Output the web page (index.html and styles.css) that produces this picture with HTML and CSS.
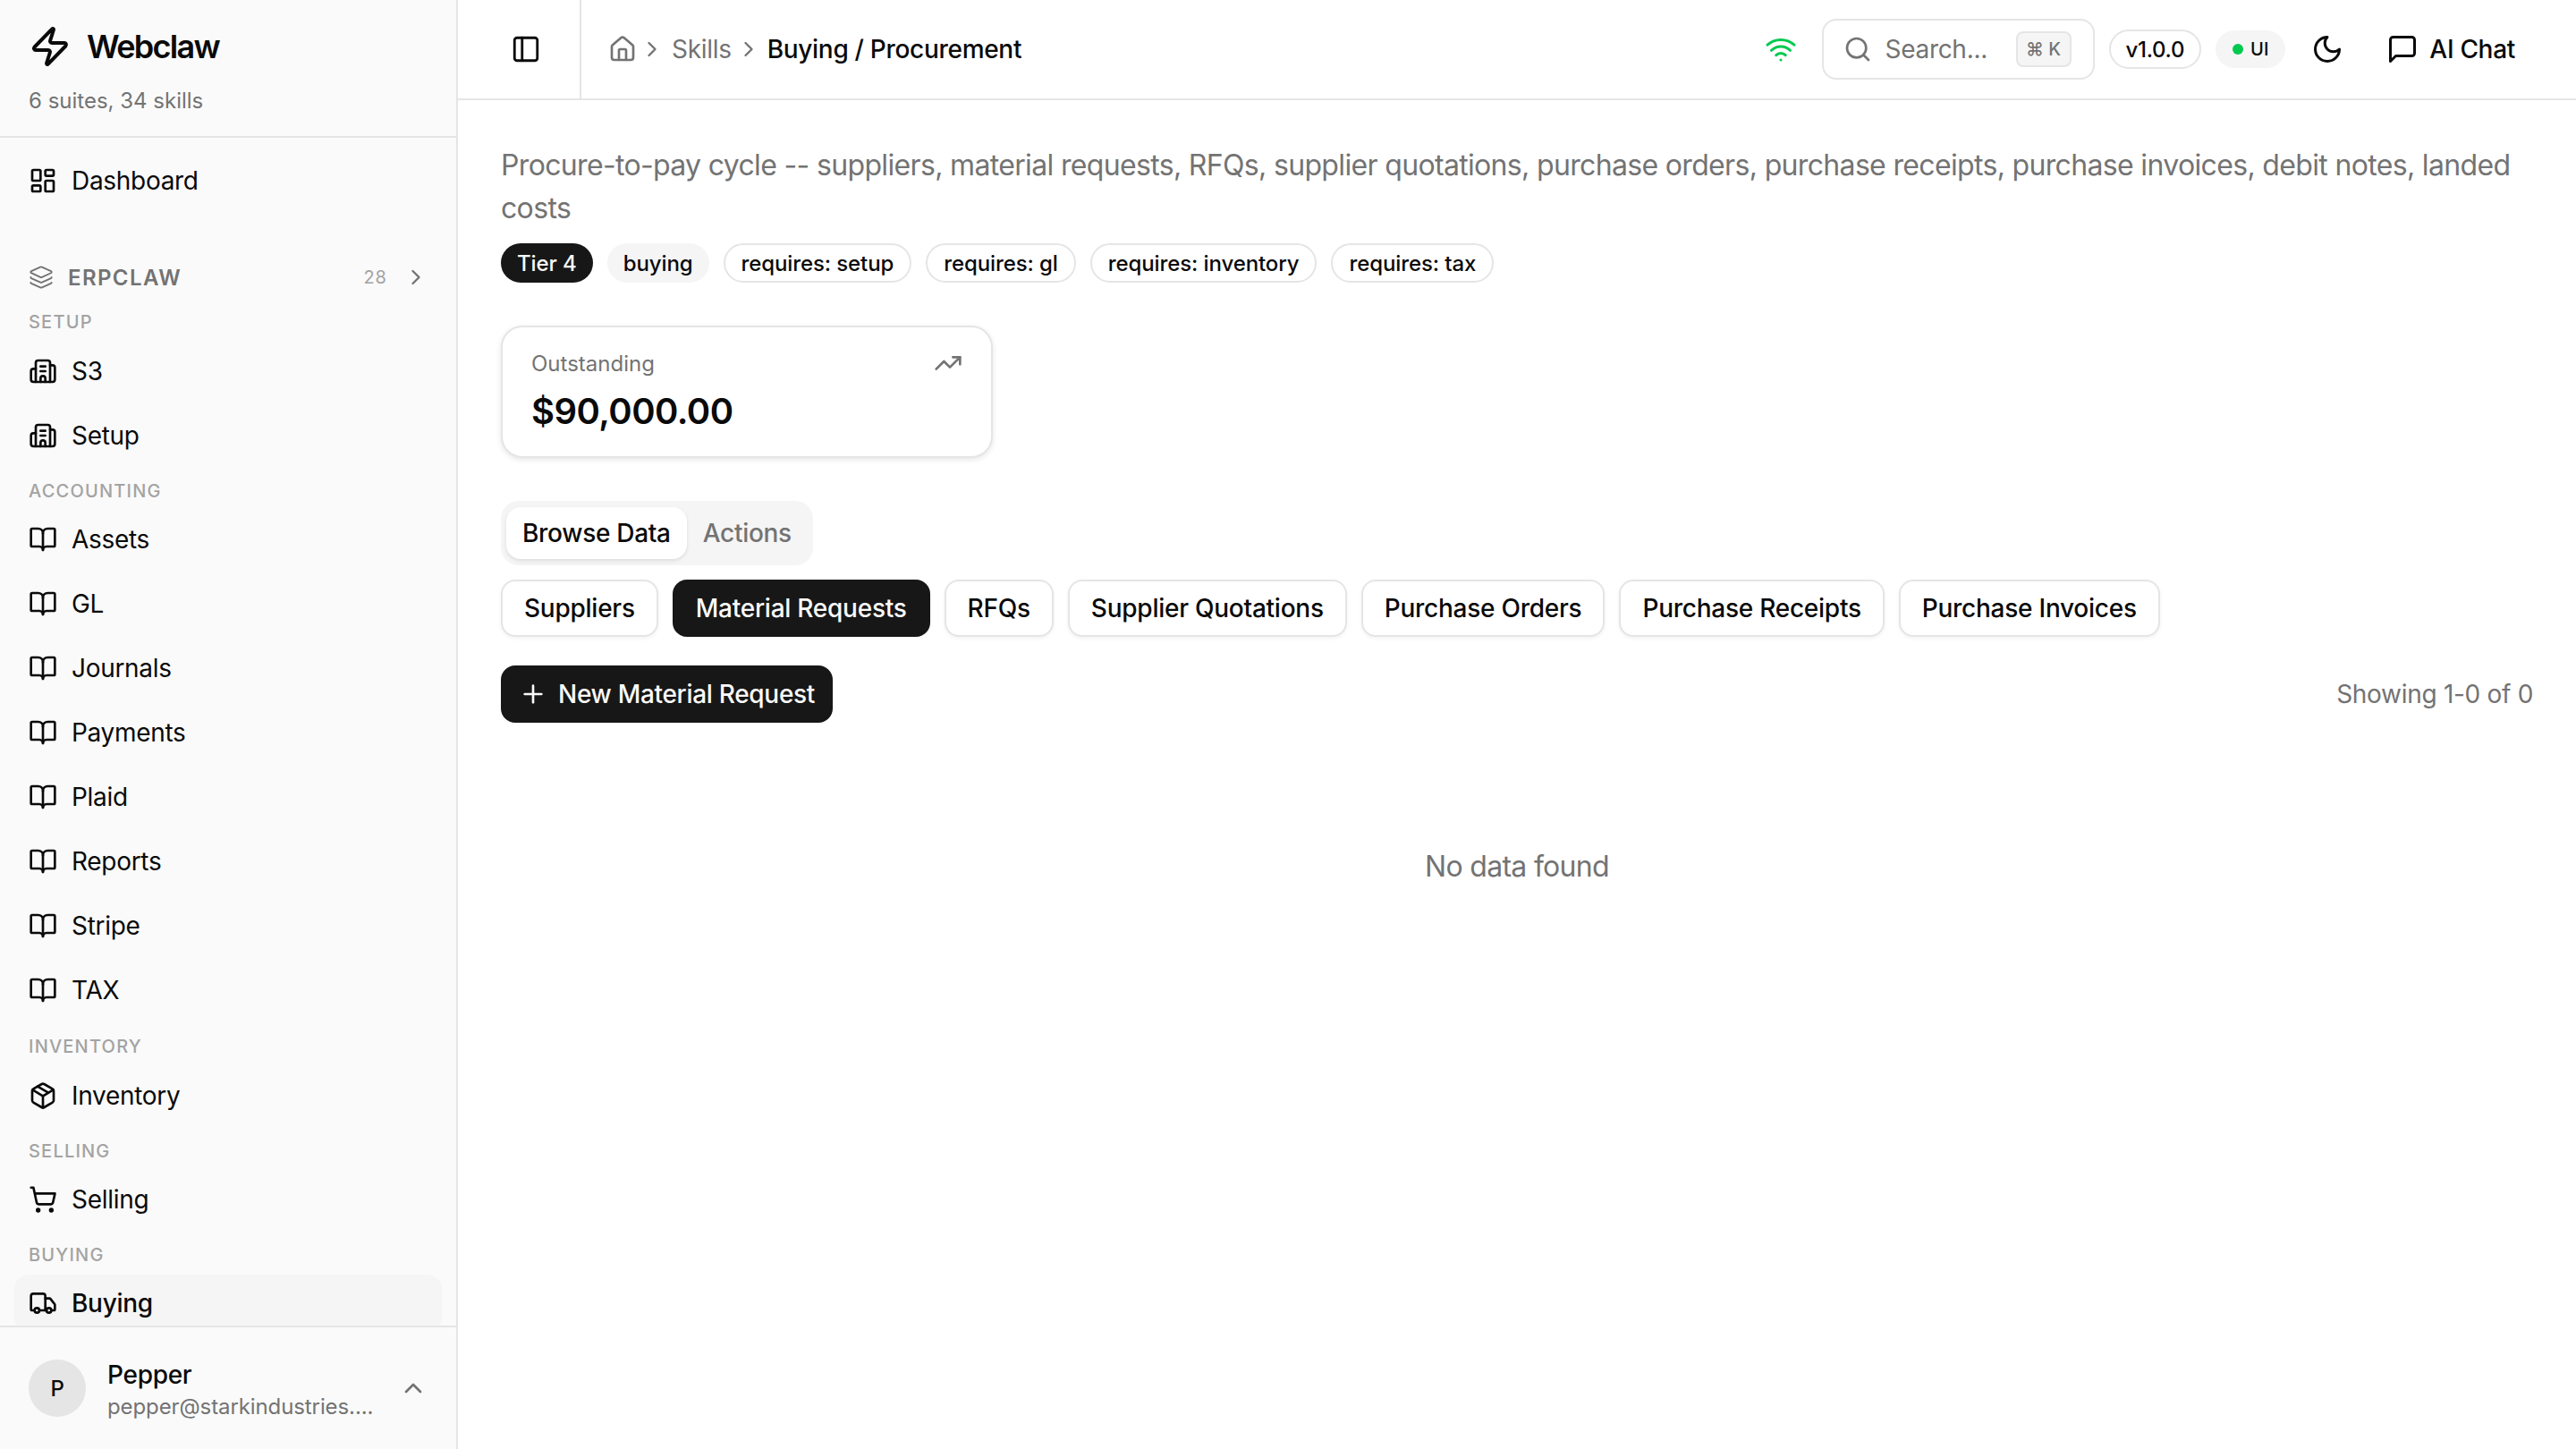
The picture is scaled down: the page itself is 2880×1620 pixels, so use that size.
FILE: index.html
```html
<!DOCTYPE html>
<html lang="en">
<head>
<meta charset="utf-8">
<title>Webclaw - Buying / Procurement</title>
<link rel="stylesheet" href="styles.css">
</head>
<body>
<svg class="defs" aria-hidden="true">
  <symbol id="i-zap" viewBox="0 0 24 24"><path d="M4 14a1 1 0 0 1-.78-1.63l9.9-10.2a.5.5 0 0 1 .86.46l-1.92 6.02A1 1 0 0 0 13 10h7a1 1 0 0 1 .78 1.63l-9.9 10.2a.5.5 0 0 1-.86-.46l1.92-6.02A1 1 0 0 0 11 14z"/></symbol>
  <symbol id="i-dash" viewBox="0 0 24 24"><rect width="7" height="9" x="3" y="3" rx="1"/><rect width="7" height="5" x="14" y="3" rx="1"/><rect width="7" height="9" x="14" y="12" rx="1"/><rect width="7" height="5" x="3" y="16" rx="1"/></symbol>
  <symbol id="i-layers" viewBox="0 0 24 24"><path d="M12.83 2.18a2 2 0 0 0-1.66 0L2.6 6.08a1 1 0 0 0 0 1.83l8.58 3.91a2 2 0 0 0 1.66 0l8.58-3.9a1 1 0 0 0 0-1.83z"/><path d="M2 12a1 1 0 0 0 .58.91l8.6 3.91a2 2 0 0 0 1.65 0l8.58-3.9A1 1 0 0 0 22 12"/><path d="M2 17a1 1 0 0 0 .58.91l8.6 3.91a2 2 0 0 0 1.65 0l8.58-3.9A1 1 0 0 0 22 17"/></symbol>
  <symbol id="i-building" viewBox="0 0 24 24"><path d="M10 12h4"/><path d="M10 8h4"/><path d="M14 21v-3a2 2 0 0 0-4 0v3"/><path d="M6 10H4a2 2 0 0 0-2 2v7a2 2 0 0 0 2 2h16a2 2 0 0 0 2-2V9a2 2 0 0 0-2-2h-2"/><path d="M6 21V5a2 2 0 0 1 2-2h8a2 2 0 0 1 2 2v16"/></symbol>
  <symbol id="i-book" viewBox="0 0 24 24"><path d="M12 7v14"/><path d="M3 18a1 1 0 0 1-1-1V4a1 1 0 0 1 1-1h5a4 4 0 0 1 4 4 4 4 0 0 1 4-4h5a1 1 0 0 1 1 1v13a1 1 0 0 1-1 1h-6a3 3 0 0 0-3 3 3 3 0 0 0-3-3z"/></symbol>
  <symbol id="i-package" viewBox="0 0 24 24"><path d="M11 21.73a2 2 0 0 0 2 0l7-4A2 2 0 0 0 21 16V8a2 2 0 0 0-1-1.73l-7-4a2 2 0 0 0-2 0l-7 4A2 2 0 0 0 3 8v8a2 2 0 0 0 1 1.73z"/><path d="M12 22V12"/><path d="m3.3 7 7.703 4.734a2 2 0 0 0 1.994 0L20.7 7"/><path d="m7.5 4.27 9 5.15"/></symbol>
  <symbol id="i-cart" viewBox="0 0 24 24"><circle cx="8" cy="21" r="1"/><circle cx="19" cy="21" r="1"/><path d="M2.05 2.05h2l2.66 12.42a2 2 0 0 0 2 1.58h9.78a2 2 0 0 0 1.95-1.57l1.65-7.43H5.12"/></symbol>
  <symbol id="i-truck" viewBox="0 0 24 24"><path d="M14 18V6a2 2 0 0 0-2-2H4a2 2 0 0 0-2 2v11a1 1 0 0 0 1 1h2"/><path d="M15 18H9"/><path d="M19 18h2a1 1 0 0 0 1-1v-3.65a1 1 0 0 0-.22-.624l-3.48-4.35A1 1 0 0 0 17.52 8H14"/><circle cx="17" cy="18" r="2"/><circle cx="7" cy="18" r="2"/></symbol>
  <symbol id="i-right" viewBox="0 0 24 24"><path d="m9 18 6-6-6-6"/></symbol>
  <symbol id="i-up" viewBox="0 0 24 24"><path d="m18 15-6-6-6 6"/></symbol>
  <symbol id="i-panel" viewBox="0 0 24 24"><rect width="18" height="18" x="3" y="3" rx="2"/><path d="M9 3v18"/></symbol>
  <symbol id="i-house" viewBox="0 0 24 24"><path d="M15 21v-8a1 1 0 0 0-1-1h-4a1 1 0 0 0-1 1v8"/><path d="M3 10a2 2 0 0 1 .709-1.528l7-5.999a2 2 0 0 1 2.582 0l7 5.999A2 2 0 0 1 21 10v9a2 2 0 0 1-2 2H5a2 2 0 0 1-2-2z"/></symbol>
  <symbol id="i-wifi" viewBox="0 0 24 24"><path d="M12 20h.01"/><path d="M2 8.82a15 15 0 0 1 20 0"/><path d="M5 12.859a10 10 0 0 1 14 0"/><path d="M8.5 16.429a5 5 0 0 1 7 0"/></symbol>
  <symbol id="i-search" viewBox="0 0 24 24"><path d="m21 21-4.34-4.34"/><circle cx="11" cy="11" r="8"/></symbol>
  <symbol id="i-moon" viewBox="0 0 24 24"><path d="M12 3a6 6 0 0 0 9 9 9 9 0 1 1-9-9Z"/></symbol>
  <symbol id="i-chat" viewBox="0 0 24 24"><path d="M21 15a2 2 0 0 1-2 2H7l-4 4V5a2 2 0 0 1 2-2h14a2 2 0 0 1 2 2z"/></symbol>
  <symbol id="i-trend" viewBox="0 0 24 24"><path d="M16 7h6v6"/><path d="m22 7-8.5 8.5-5-5L2 17"/></symbol>
  <symbol id="i-plus" viewBox="0 0 24 24"><path d="M5 12h14"/><path d="M12 5v14"/></symbol>
</svg>

<div class="app">
  <aside class="sidebar">
    <div class="brand">
      <div class="brand-row">
        <svg class="ic ic-48"><use href="#i-zap"/></svg>
        <span class="brand-name">Webclaw</span>
      </div>
      <div class="brand-sub">6 suites, 34 skills</div>
    </div>

    <nav class="nav">
      <a class="item"><svg class="ic"><use href="#i-dash"/></svg>Dashboard</a>

      <div class="suite">
        <svg class="ic ic-28 muted thin"><use href="#i-layers"/></svg>
        <span class="suite-name">ERPCLAW</span>
        <span class="suite-count">28</span>
        <svg class="ic ic-28 muted"><use href="#i-right"/></svg>
      </div>

      <div class="label label-first">SETUP</div>
      <div class="group">
        <a class="item"><svg class="ic"><use href="#i-building"/></svg>S3</a>
        <a class="item"><svg class="ic"><use href="#i-building"/></svg>Setup</a>
      </div>

      <div class="label">ACCOUNTING</div>
      <div class="group">
        <a class="item"><svg class="ic"><use href="#i-book"/></svg>Assets</a>
        <a class="item"><svg class="ic"><use href="#i-book"/></svg>GL</a>
        <a class="item"><svg class="ic"><use href="#i-book"/></svg>Journals</a>
        <a class="item"><svg class="ic"><use href="#i-book"/></svg>Payments</a>
        <a class="item"><svg class="ic"><use href="#i-book"/></svg>Plaid</a>
        <a class="item"><svg class="ic"><use href="#i-book"/></svg>Reports</a>
        <a class="item"><svg class="ic"><use href="#i-book"/></svg>Stripe</a>
        <a class="item"><svg class="ic"><use href="#i-book"/></svg>TAX</a>
      </div>

      <div class="label label-wide">INVENTORY</div>
      <div class="group">
        <a class="item"><svg class="ic"><use href="#i-package"/></svg>Inventory</a>
      </div>

      <div class="label">SELLING</div>
      <div class="group">
        <a class="item"><svg class="ic"><use href="#i-cart"/></svg>Selling</a>
      </div>

      <div class="label">BUYING</div>
      <div class="group">
        <a class="item item-active"><svg class="ic"><use href="#i-truck"/></svg>Buying</a>
      </div>
    </nav>

    <div class="user">
      <div class="avatar">P</div>
      <div class="user-info">
        <div class="user-name">Pepper</div>
        <div class="user-mail">pepper@starkindustries....</div>
      </div>
      <svg class="ic muted"><use href="#i-up"/></svg>
    </div>
  </aside>

  <div class="main">
    <header class="topbar">
      <div class="toggle"><svg class="ic ic-toggle"><use href="#i-panel"/></svg></div>
      <div class="crumbs">
        <svg class="ic home muted"><use href="#i-house"/></svg>
        <svg class="ic ic-28 muted"><use href="#i-right"/></svg>
        <span class="crumb-link">Skills</span>
        <svg class="ic ic-28 muted"><use href="#i-right"/></svg>
        <span class="crumb-here">Buying / Procurement</span>
      </div>
      <div class="tools">
        <svg class="ic ic-36 wifi"><use href="#i-wifi"/></svg>
        <div class="search">
          <svg class="ic muted"><use href="#i-search"/></svg>
          <span class="search-text">Search...</span>
          <kbd class="kbd">⌘ K</kbd>
        </div>
        <span class="version">v1.0.0</span>
        <span class="status"><span class="dot"></span>UI</span>
        <svg class="ic ic-36 moon"><use href="#i-moon"/></svg>
        <span class="chat"><svg class="ic ic-36"><use href="#i-chat"/></svg>AI Chat</span>
      </div>
    </header>

    <main class="content">
      <p class="desc">Procure-to-pay cycle -- suppliers, material requests, RFQs, supplier quotations, purchase orders, purchase receipts, purchase invoices, debit notes, landed costs</p>
      <div class="tags">
        <span class="tag tag-dark">Tier 4</span>
        <span class="tag tag-soft">buying</span>
        <span class="tag tag-line">requires: setup</span>
        <span class="tag tag-line">requires: gl</span>
        <span class="tag tag-line">requires: inventory</span>
        <span class="tag tag-line">requires: tax</span>
      </div>

      <div class="card">
        <div class="card-top">
          <span class="card-label">Outstanding</span>
          <svg class="ic muted"><use href="#i-trend"/></svg>
        </div>
        <div class="card-value">$90,000.00</div>
      </div>

      <div class="tabs">
        <span class="tab tab-on">Browse Data</span>
        <span class="tab">Actions</span>
      </div>

      <div class="subtabs">
        <span class="btn">Suppliers</span>
        <span class="btn btn-dark">Material Requests</span>
        <span class="btn">RFQs</span>
        <span class="btn">Supplier Quotations</span>
        <span class="btn">Purchase Orders</span>
        <span class="btn">Purchase Receipts</span>
        <span class="btn">Purchase Invoices</span>
      </div>

      <div class="toolbar">
        <span class="btn btn-dark btn-new"><svg class="ic"><use href="#i-plus"/></svg>New Material Request</span>
        <span class="count">Showing 1-0 of 0</span>
      </div>

      <div class="empty">No data found</div>
    </main>
  </div>
</div>
</body>
</html>
```

FILE: styles.css
```css
* { box-sizing: border-box; }
html, body { margin: 0; height: 100%; }
body {
  background: #fff;
  color: #0a0a0a;
  font-family: Inter, "Liberation Sans", sans-serif;
  font-size: 28px;
  letter-spacing: -0.3px;
  overflow: hidden;
}
.defs { display: none; }

.ic {
  width: 32px;
  height: 32px;
  flex: none;
  fill: none;
  stroke: currentColor;
  stroke-width: 2;
  stroke-linecap: round;
  stroke-linejoin: round;
}
.ic-48 { width: 48px; height: 48px; }
.ic-36 { width: 36px; height: 36px; }
.ic-28 { width: 28px; height: 28px; }
.muted { color: #737373; }
.thin { stroke-width: 1.6; }

.app { display: flex; height: 1620px; }

/* Sidebar */
.sidebar {
  width: 512px;
  flex: none;
  display: flex;
  flex-direction: column;
  background: #fafafa;
  border-right: 2px solid #e5e5e5;
}
.brand {
  height: 154px;
  flex: none;
  padding: 28px 32px 0;
  border-bottom: 2px solid #e5e5e5;
}
.brand-row { display: flex; align-items: center; gap: 17px; }
.brand-name { font-size: 36px; font-weight: 600; letter-spacing: -1.7px; line-height: 48px; }
.brand-sub { font-size: 24px; line-height: 32px; letter-spacing: 0; color: #737373; margin-top: 21px; }

.nav {
  flex: 1;
  min-height: 0;
  overflow: hidden;
  padding: 16px;
}
.group { display: flex; flex-direction: column; gap: 8px; }
.item {
  display: flex;
  align-items: center;
  gap: 16px;
  height: 64px;
  flex: none;
  padding: 0 16px;
  border-radius: 16px;
  font-size: 28px;
  color: #0a0a0a;
}
.item-active { background: #f5f5f5; font-weight: 500; }

.suite {
  display: flex;
  align-items: center;
  height: 48px;
  margin-top: 52px;
  padding: 0 15px 0 16px;
}
.suite-name {
  margin-left: 16px;
  font-size: 24px;
  font-weight: 600;
  letter-spacing: 1.4px;
  color: #737373;
}
.suite-count {
  margin-left: auto;
  margin-right: 18px;
  font-size: 20px;
  letter-spacing: 1px;
  color: #a3a3a3;
}

.label {
  height: 30px;
  line-height: 30px;
  margin: 15px 0 7px;
  padding-left: 16px;
  font-size: 20px;
  font-weight: 500;
  letter-spacing: 1.2px;
  color: #a3a3a3;
}
.label-first { margin: 11px 0 8px; }
.label-wide { margin: 16px 0 8px; }

.user {
  height: 138px;
  flex: none;
  display: flex;
  align-items: center;
  padding: 0 32px;
  border-top: 2px solid #e5e5e5;
}
.avatar {
  width: 64px;
  height: 64px;
  flex: none;
  display: flex;
  align-items: center;
  justify-content: center;
  border-radius: 50%;
  background: #e5e5e5;
  font-size: 24px;
  font-weight: 500;
}
.user-info { flex: 1; min-width: 0; margin-left: 24px; padding-top: 4px; }
.user-name { font-size: 28px; font-weight: 500; line-height: 38px; }
.user-mail { font-size: 24px; line-height: 34px; letter-spacing: -0.1px; color: #737373; }

/* Main */
.main { flex: 1; min-width: 0; display: flex; flex-direction: column; }
.topbar {
  height: 112px;
  flex: none;
  display: flex;
  align-items: center;
  border-bottom: 2px solid #e5e5e5;
}
.toggle {
  width: 138px;
  height: 110px;
  flex: none;
  display: flex;
  align-items: center;
  justify-content: center;
  border-right: 2px solid #e5e5e5;
  padding-left: 15px;
}
.ic-toggle { width: 34px; height: 34px; }
.crumbs { display: flex; align-items: center; gap: 8px; margin-left: 30px; }
.home { margin-right: -5px; }
.crumb-link { color: #737373; margin-right: -3px; }
.crumb-here { font-weight: 500; margin-left: -1px; }

.tools { margin-left: auto; display: flex; align-items: center; padding-right: 68px; }
.wifi { color: #00c950; margin-right: 28px; }
.search {
  display: flex;
  align-items: center;
  width: 305px;
  height: 68px;
  padding: 0 24px 0 22px;
  border: 2px solid #e5e5e5;
  border-radius: 16px;
  background: #fff;
  gap: 15px;
  color: #737373;
}
.search-text { flex: 1; }
.kbd {
  display: flex;
  align-items: center;
  justify-content: center;
  width: 62px;
  height: 40px;
  background: #f5f5f5;
  border: 2px solid #e5e5e5;
  border-radius: 8px;
  font-family: Inter, "DejaVu Sans", sans-serif;
  font-size: 20px;
  font-weight: 500;
  letter-spacing: 0;
  color: #737373;
}
.version {
  display: flex;
  align-items: center;
  height: 44px;
  margin-left: 16px;
  padding: 0 17px;
  border: 2px solid #e5e5e5;
  border-radius: 22px;
  font-size: 24px;
  font-weight: 500;
}
.status {
  display: flex;
  align-items: center;
  gap: 8px;
  height: 42px;
  margin-left: 16px;
  padding: 0 19px;
  border-radius: 21px;
  background: #f5f5f5;
  font-size: 20px;
  font-weight: 500;
  letter-spacing: 0;
}
.dot { width: 12px; height: 12px; border-radius: 50%; background: #00c950; }
.moon { margin-left: 29px; }
.chat { display: flex; align-items: center; gap: 12px; margin-left: 48px; font-weight: 500; }

.content { flex: 1; padding: 49px 48px 48px; min-height: 0; }
.desc { margin: 0; font-size: 32px; line-height: 48px; letter-spacing: -0.66px; color: #737373; }
.tags { display: flex; gap: 16px; margin-top: 15px; }
.tag {
  display: flex;
  align-items: center;
  height: 44px;
  padding: 0 18px;
  border-radius: 22px;
  font-size: 24px;
  font-weight: 500;
  letter-spacing: -0.1px;
}
.tag-dark { background: #171717; color: #fafafa; }
.tag-soft { background: #f5f5f5; }
.tag-line { border: 2px solid #e5e5e5; }

.card {
  width: 550px;
  height: 148px;
  margin-top: 48px;
  padding: 28px 32px 0;
  border: 2px solid #e5e5e5;
  border-radius: 24px;
  background: #fff;
  box-shadow: 0 2px 6px rgba(0, 0, 0, 0.1);
}
.card-top {
  display: flex;
  align-items: center;
  justify-content: space-between;
  height: 24px;
  font-size: 24px;
  letter-spacing: 0;
  color: #737373;
}
.card-value { margin-top: 18px; font-size: 40px; font-weight: 600; line-height: 48px; letter-spacing: -0.55px; }

.tabs {
  display: flex;
  align-items: center;
  width: max-content;
  height: 72px;
  margin-top: 48px;
  padding: 0 6px;
  border-radius: 20px;
  background: #f5f5f5;
}
.tab {
  display: flex;
  align-items: center;
  height: 58px;
  padding: 0 18px;
  border-radius: 16px;
  font-weight: 500;
  color: #737373;
}
.tab-on { background: #fff; color: #0a0a0a; box-shadow: 0 2px 4px rgba(0, 0, 0, 0.1); }

.subtabs { display: flex; gap: 16px; margin-top: 16px; }
.subtabs .btn { letter-spacing: -0.25px; }
.btn {
  display: flex;
  align-items: center;
  height: 64px;
  padding: 0 24px;
  border: 2px solid #e5e5e5;
  border-radius: 16px;
  background: #fff;
  font-weight: 500;
  box-shadow: 0 2px 4px rgba(0, 0, 0, 0.05);
}
.btn-dark { background: #171717; border-color: #171717; color: #fafafa; box-shadow: none; }
.btn-new { gap: 12px; padding: 0 18px; }

.toolbar { display: flex; align-items: center; justify-content: space-between; margin-top: 32px; }
.count { color: #737373; }

.empty { margin-top: 137px; text-align: center; font-size: 32px; line-height: 48px; letter-spacing: -0.7px; color: #737373; }
```
